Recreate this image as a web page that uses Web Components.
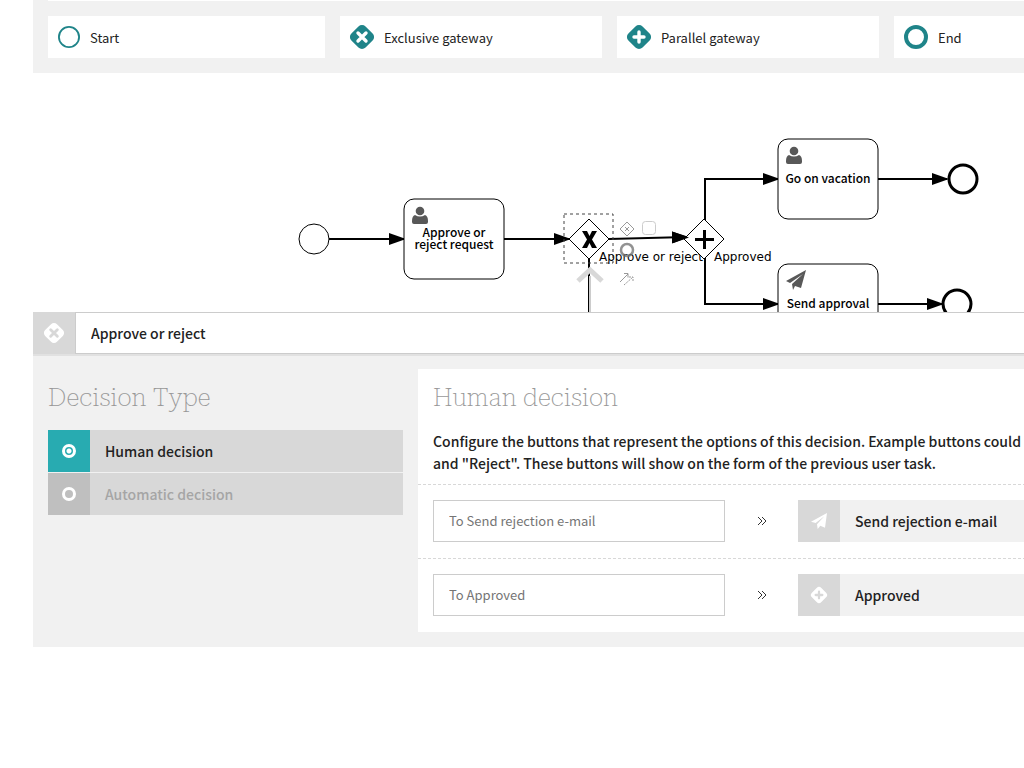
<!DOCTYPE html>
<html lang="en">
<head>
<meta charset="utf-8">
<title>Process designer</title>
<style>
  html, body { margin: 0; background: #fff; }
  body { overflow-x: hidden; font-family: "Noto Sans CJK SC", "Open Sans", sans-serif; color: #222; }
</style>
</head>
<body>
<process-designer>
  <element-palette slot="palette">
    <palette-item icon="start">Start</palette-item>
    <palette-item icon="exclusive">Exclusive gateway</palette-item>
    <palette-item icon="parallel">Parallel gateway</palette-item>
    <palette-item icon="end">End</palette-item>
  </element-palette>
  <process-canvas slot="canvas"></process-canvas>
  <element-panel slot="panel" name="Approve or reject">
    <decision-types slot="side"></decision-types>
    <decision-card slot="main" heading="Human decision">
      <p slot="intro">Configure the buttons that represent the options of this decision. Example buttons could<br>and "Reject". These buttons will show on the form of the previous user task.</p>
      <decision-option icon="plane" hint="To Send rejection e-mail">Send rejection e-mail</decision-option>
      <decision-option icon="parallel" hint="To Approved">Approved</decision-option>
    </decision-card>
  </element-panel>
</process-designer>

<script>
const DIAMOND = '<rect x="2" y="2" width="20" height="20" rx="5" transform="rotate(45 12 12)" fill="currentColor"/>';
const ICONS = {
  start: '<circle cx="12" cy="12" r="11" fill="none" stroke="currentColor" stroke-width="2"/>',
  end: '<circle cx="12" cy="12" r="10" fill="none" stroke="currentColor" stroke-width="4"/>',
  exclusive: DIAMOND + '<path d="M8 8l8 8M16 8l-8 8" stroke="var(--mark, #fff)" stroke-width="3.4" stroke-linecap="round"/>',
  parallel: DIAMOND + '<path d="M12 7v10M7 12h10" stroke="var(--mark, #fff)" stroke-width="3.4" stroke-linecap="round"/>',
  plane: '<path d="M24 0L21 22L14 19L10 24L9 17L20 5L7 15L0 13Z" fill="currentColor"/>'
};
const icon = (name, size) => `<svg width="${size}" height="${size}" viewBox="0 0 24 24" overflow="visible" aria-hidden="true">${ICONS[name]}</svg>`;

function define(tag, render) {
  customElements.define(tag, class extends HTMLElement {
    connectedCallback() {
      if (this.shadowRoot) return;
      this.attachShadow({ mode: 'open' }).innerHTML = render(this);
    }
  });
}

define('process-designer', () => `
  <style>
    :host { display: block; overflow: hidden; }
    main { display: flex; flex-direction: column; margin: 0 -147px 0 33px; }
  </style>
  <main><slot name="palette"></slot><slot name="canvas"></slot><slot name="panel"></slot></main>`);

define('element-palette', () => `
  <style>
    :host { display: block; background: #f1f1f1; padding: 0 15px 15px; }
    .previous { height: 1px; background: #fff; margin-bottom: 15px; }
    .items { display: grid; grid-template-columns: 277fr 262fr 262fr 262fr; gap: 15px; }
  </style>
  <div class="previous"></div>
  <div class="items"><slot></slot></div>`);

define('palette-item', el => `
  <style>
    :host { display: block; background: #fff; }
    button { display: flex; align-items: center; gap: 10px; width: 100%; height: 42px; margin: 0; padding: 0 10px;
      border: 0; background: none; font: inherit; font-size: 13px; line-height: 20px; color: #222; text-align: left; }
    svg { flex: none; color: #1f8489; }
    span { padding-top: 2px; }
  </style>
  <button type="button">${icon(el.getAttribute('icon'), el.getAttribute('icon') === 'start' ? 22 : 24)}<span><slot></slot></span></button>`);

define('process-canvas', () => `
  <style>
    :host { display: block; height: 239px; overflow: hidden; }
    svg { display: block; }
    text { font-size: 12px; font-weight: 500; fill: #000; }
    .wide { font-family: "DejaVu Sans", sans-serif; font-weight: 400; }
    .mid { text-anchor: middle; }
    .flow { fill: none; stroke: #000; stroke-width: 2; marker-end: url(#arrow); }
    .shape { fill: #fff; stroke: #000; stroke-width: 1; }
    .end { fill: #fff; stroke: #000; stroke-width: 3; }
    .glyph { fill: #585858; }
  </style>
  <svg width="991" height="239" viewBox="33 73 991 239" role="img" aria-label="Vacation request process">
    <defs>
      <marker id="arrow" markerUnits="userSpaceOnUse" markerWidth="18" markerHeight="12" refX="15" refY="6" orient="auto"><path d="M0 0L17 6L0 12Z"/></marker>
      <g id="user" class="glyph"><circle cx="8" cy="4" r="4.3"/><path d="M3 8Q8 11 13 8Q16 9 16 14V15Q16 17 14 17H2Q0 17 0 15V14Q0 9 3 8Z"/></g>
    </defs>
    <path class="flow" d="M329 239H404"/>
    <path class="flow" d="M504 239H569"/>
    <path class="flow" d="M609 239L687 237"/>
    <path class="flow" d="M705 220V179H778"/>
    <path class="flow" d="M705 258V304H778"/>
    <path class="flow" d="M878 179H947"/>
    <path class="flow" d="M878 304H942"/>
    <path d="M589 259V312" stroke="#000" stroke-width="2"/>
    <path d="M590 276V312" stroke="#ccc" stroke-width="2"/>
    <circle class="shape" cx="314" cy="239" r="15"/>
    <rect class="shape" x="404" y="199" width="100" height="80" rx="10"/>
    <use href="#user" x="412" y="207"/>
    <text class="mid" x="454" y="237">Approve or</text>
    <text class="mid" x="454" y="249">reject request</text>
    <rect class="shape" x="778" y="139" width="100" height="80" rx="10"/>
    <use href="#user" x="786" y="147"/>
    <text class="mid" x="828" y="183">Go on vacation</text>
    <rect class="shape" x="778" y="264" width="100" height="80" rx="10"/>
    <path class="glyph" d="M806 270L801 288L795 286L793 290L792 284L803 274L790 283L786 281Z"/>
    <text class="mid" x="828" y="308">Send approval</text>
    <circle class="end" cx="963" cy="179" r="14"/>
    <circle class="end" cx="957" cy="304" r="14"/>
    <path class="shape" d="M589 219L609 239L589 259L569 239Z"/>
    <path d="M582 231H587L589.500 236L592 231H597L592 239.500L597 248H592L589.500 243L587 248H582L587 239.500Z"/>
    <rect x="564" y="214" width="49" height="49" fill="none" stroke="#444" stroke-dasharray="3 3"/>
    <path d="M578 281L590 270L602 281" fill="none" stroke="#d8d8d8" stroke-width="5"/>
    <text class="wide" x="599" y="261">Approve or reject</text>
    <path class="shape" d="M704 219L724 239L704 259L684 239Z"/>
    <path d="M704.500 230V249M695 239.500H714" stroke="#000" stroke-width="3"/>
    <path d="M0 0L17 6L0 12Z" transform="translate(672 231.500)"/>
    <text class="wide" x="714" y="261">Approved</text>
    <g fill="none" stroke="#999">
      <path d="M627 222L634 229L627 236L620 229Z M625 227l4 4M629 227l-4 4"/>
      <rect x="642.500" y="221.500" width="13" height="13" rx="3" stroke="#ccc"/>
      <circle cx="627" cy="250" r="6" stroke-width="2.500" stroke="#777" opacity=".8"/>
      <path d="M620 282l8-8M624 273.500h4v4"/><path d="M624 285l9-8M629 277h4v4" stroke-dasharray="2 1"/>
    </g>
  </svg>`);

define('element-panel', el => `
  <style>
    :host { display: block; background: #f1f1f1; padding-bottom: 15px; }
    header { display: flex; height: 42px; box-shadow: 0 2px 0 #e1e1e1; }
    .type { display: flex; align-items: center; justify-content: center; width: 42px; background: #d8d8d8; color: #fff; --mark: #d8d8d8; }
    input { flex: 1; min-width: 0; box-sizing: border-box; margin: 0; padding: 0 15px; border: 1px solid #ccc;
      border-radius: 0; background: #fff; font: inherit; font-size: 14px; font-weight: 500; color: #222; outline: 0; }
    .body { display: grid; grid-template-columns: 355fr 738fr; gap: 15px; padding: 15px 15px 0; }
  </style>
  <header><div class="type">${icon('exclusive', 20)}</div><input type="text" aria-label="Name" value="${el.getAttribute('name')}"></header>
  <div class="body"><slot name="side"></slot><slot name="main"></slot></div>`);

define('decision-types', () => `
  <style>
    :host { display: block; }
    h2 { margin: 10px 0 13px; font: 100 25px/38px "Roboto Slab", "Roboto Serif", "Roboto", serif; color: #999; }
    label { display: flex; align-items: center; height: 42px; margin-bottom: 1px; background: #d8d8d8; font-size: 14px; font-weight: 500; line-height: 20px; color: #a5a5a5; }
    .box { display: flex; align-items: center; justify-content: center; width: 42px; height: 42px; margin-right: 15px; background: #bfbfbf; }
    input { appearance: none; box-sizing: border-box; width: 14px; height: 14px; margin: 0; border: 3px solid #fff; border-radius: 50%; }
    label:has(:checked) { color: #222; }
    label:has(:checked) .box { background: #28abb1; }
    input:checked { background: radial-gradient(circle, #fff 2px, transparent 3px); }
  </style>
  <h2>Decision Type</h2>
  <label><span class="box"><input type="radio" name="type" checked></span>Human decision</label>
  <label><span class="box"><input type="radio" name="type"></span>Automatic decision</label>`);

define('decision-card', el => `
  <style>
    :host { display: block; background: #fff; }
    h2 { margin: 0; padding: 10px 15px 13px; font: 100 25px/38px "Roboto Slab", "Roboto Serif", "Roboto", serif; color: #999; }
    ::slotted(p) { margin: 0; padding: 0 15px 10px; font-size: 14px; font-weight: 500; line-height: 22px; white-space: nowrap; }
  </style>
  <h2>${el.getAttribute('heading')}</h2>
  <slot name="intro"></slot>
  <slot></slot>`);

define('decision-option', el => `
  <style>
    :host { display: grid; grid-template-columns: 292fr 73fr 343fr; align-items: center; padding: 15px 15px 16px; border-top: 1px dashed #d8d8d8; }
    input { width: 100%; height: 42px; box-sizing: border-box; margin: 0; padding: 0 15px 2px; border: 1px solid #ccc; border-radius: 0;
      font: inherit; font-size: 13px; color: #222; }
    input::placeholder { color: #757575; opacity: 1; }
    .arrow { justify-self: center; color: #333; }
    .target { display: flex; align-items: center; height: 42px; background: #f1f1f1; font-size: 14px; font-weight: 500; line-height: 20px; }
    .box { display: flex; align-items: center; justify-content: center; width: 42px; height: 42px; margin-right: 15px; background: #d8d8d8; color: #fff; --mark: #d8d8d8; }
  </style>
  <input type="text" aria-label="Button label" placeholder="${el.getAttribute('hint')}">
  <svg class="arrow" width="8" height="8" viewBox="0 0 8 8" fill="none" stroke="currentColor" aria-hidden="true"><path d="M0 0l4 4l-4 4M4 0l4 4l-4 4"/></svg>
  <div class="target"><span class="box">${icon(el.getAttribute('icon'), 16)}</span><slot></slot></div>`);
</script>
</body>
</html>
